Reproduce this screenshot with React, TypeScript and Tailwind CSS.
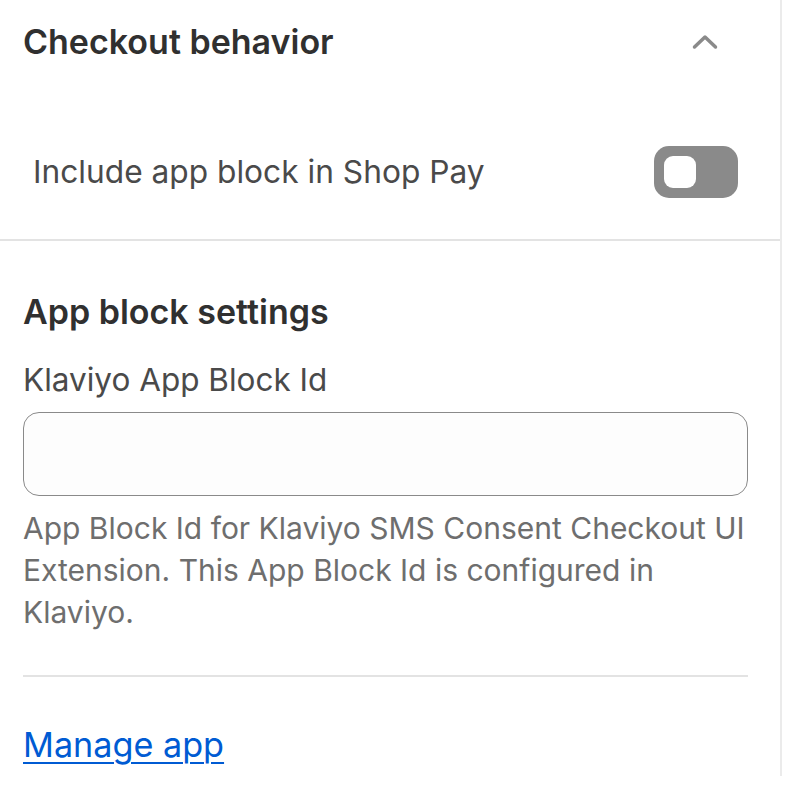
import React from 'react';

const App: React.FC = () => {
  return (
    <div className="min-h-screen bg-white font-['Inter','Liberation_Sans',sans-serif] text-[#303030]">
      <div className="w-[782px] h-[776px] border-r-2 border-[#ebebeb] flex flex-col">
        <section className="h-[241px] border-b-2 border-[#e3e3e3] flex flex-col">
          <div className="flex items-center justify-between h-[84px] pl-[23px] pr-[62px]">
            <h2 className="text-[34px] font-semibold leading-[40px]">Checkout behavior</h2>
            <svg width="26" height="16" viewBox="0 0 26 16" fill="none" className="text-[#8a8a8a]">
              <path d="M2.5 13L13 3l10.5 10" stroke="currentColor" strokeWidth="3.5" strokeLinecap="round" strokeLinejoin="round" />
            </svg>
          </div>
          <div className="flex items-center justify-between mt-[62px] pl-[33px] pr-[42px]">
            <span className="text-[31.7px] leading-[40px] text-[#4a4a4a]">Include app block in Shop Pay</span>
            <button
              type="button"
              aria-pressed="false"
              className="w-[84px] h-[52px] rounded-[15px] bg-[#8a8a8a] flex items-center px-[10px]"
            >
              <span className="w-[32px] h-[32px] rounded-[9px] bg-white" />
            </button>
          </div>
        </section>

        <section className="px-[23px] pr-[32px] flex flex-col">
          <h2 className="text-[34px] font-semibold mt-[51px] leading-[40px]">App block settings</h2>
          <label className="text-[31.5px] mt-[28px] leading-[40px] text-[#4a4a4a]">Klaviyo App Block Id</label>
          <input
            type="text"
            className="mt-[12px] h-[84px] w-full rounded-[16px] border-[1.5px] border-[#8a8a8a] bg-[#fdfdfd] outline-none px-4"
          />
          <p className="mt-[11px] text-[30px] leading-[42px] text-[#6e6e6e]">
            App Block Id for Klaviyo SMS Consent Checkout UI Extension. This App Block Id is configured in Klaviyo.
          </p>
          <div className="mt-[42px] h-[2px] bg-[#e3e3e3]" />
          <a href="#" className="mt-[48px] text-[34.2px] leading-[40px] text-[#005bd3] underline underline-offset-[5px] decoration-[2px] self-start">
            Manage app
          </a>
        </section>
      </div>
    </div>
  );
};

export default App;
